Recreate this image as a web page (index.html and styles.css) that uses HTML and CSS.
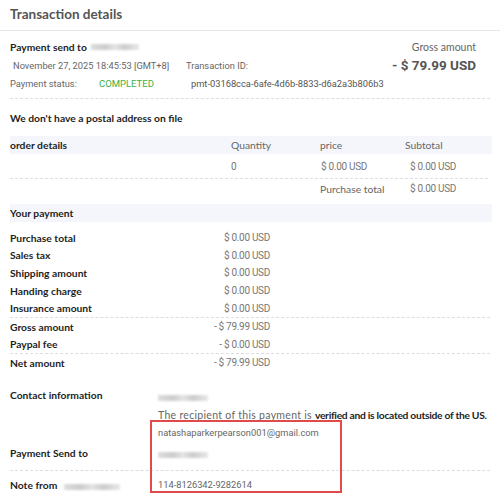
FILE: index.html
```html
<!DOCTYPE html>
<html lang="en">
<head>
  <meta charset="UTF-8">
  <title>Transaction details</title>
  <link rel="stylesheet" href="styles.css">
</head>
<body>

  <!-- Cabecera -->
  <div class="title">Transaction details</div>

  <div class="page">

    <!-- Resumen -->
    <div class="summary">
      <div class="sum-left">
        <div class="sum-row">
          <span class="label">Payment send to</span>
          <span class="blur blur-name"></span>
        </div>
        <div class="sum-row">
          <span class="muted date">November 27, 2025 18:45:53 [GMT+8]</span>
          <span class="muted tx-label">Transaction ID:</span>
        </div>
        <div class="sum-row">
          <span class="muted status">Payment status:</span>
          <span class="completed">COMPLETED</span>
          <span class="muted tx-id">pmt-03168cca-6afe-4d6b-8833-d6a2a3b806b3</span>
        </div>
      </div>
      <div class="sum-right">
        <div class="muted gross-label">Gross amount</div>
        <div class="gross">- $ 79.99 USD</div>
      </div>
    </div>

    <div class="label postal">We don't have a postal address on file</div>

    <!-- Detalle del pedido -->
    <div class="order">
      <div class="order-row head">
        <span class="label">order details</span>
        <span class="muted c-qty">Quantity</span>
        <span class="muted c-price">price</span>
        <span class="muted c-sub">Subtotal</span>
      </div>
      <div class="order-row line">
        <span></span>
        <span class="muted num c-qty">0</span>
        <span class="muted num c-price">$ 0.00 USD</span>
        <span class="muted num c-sub">$ 0.00 USD</span>
      </div>
      <div class="order-row">
        <span></span>
        <span></span>
        <span class="muted c-total">Purchase total</span>
        <span class="muted num c-sub">$ 0.00 USD</span>
      </div>
    </div>

    <!-- Tu pago -->
    <div class="band label">Your payment</div>
    <div class="pay">
      <div class="pay-row"><span class="label">Purchase total</span><span class="num">$ 0.00 USD</span></div>
      <div class="pay-row"><span class="label">Sales tax</span><span class="num">$ 0.00 USD</span></div>
      <div class="pay-row"><span class="label">Shipping amount</span><span class="num">$ 0.00 USD</span></div>
      <div class="pay-row"><span class="label">Handing charge</span><span class="num">$ 0.00 USD</span></div>
      <div class="pay-row line"><span class="label">Insurance amount</span><span class="num">$ 0.00 USD</span></div>
      <div class="pay-row"><span class="label">Gross amount</span><span class="num">- $ 79.99 USD</span></div>
      <div class="pay-row line"><span class="label">Paypal fee</span><span class="num">- $ 0.00 USD</span></div>
      <div class="pay-row"><span class="label">Net amount</span><span class="num">- $ 79.99 USD</span></div>
    </div>

    <!-- Contacto -->
    <div class="contact">
      <div class="c-row">
        <span class="label">Contact information</span>
        <div class="c-val">
          <span class="blur blur-small"></span>
          <div class="recipient">The recipient of this payment is <b>verified and is located outside of the US.</b></div>
          <div class="muted">natashaparkerpearson001@gmail.com</div>
        </div>
      </div>
      <div class="c-row send line">
        <span class="label">Payment Send to</span>
        <div class="c-val"><span class="blur blur-small"></span></div>
      </div>
      <div class="c-row note">
        <span class="label">Note from <span class="blur blur-note"></span></span>
        <div class="c-val muted">114-8126342-9282614</div>
      </div>
      <div class="mark"></div>
    </div>

  </div>

</body>
</html>
```

FILE: styles.css
```css
body {
  margin: 0;
  background: #fff;
  color: #222;
  font-family: Lato, sans-serif;
  width: 500px;
  height: 500px;
  overflow: hidden;
  white-space: nowrap;
}

.title {
  height: 31px;
  box-sizing: border-box;
  padding: 6px 10px 0;
  font-size: 13.5px;
  font-weight: 700;
  color: #555;
  border-bottom: 1px solid #e6e6e6;
}

.page {
  padding: 0 10px;
}

.label {
  font-size: 10.3px;
  font-weight: 700;
  color: #1e1e1e;
}

.muted {
  font-family: Roboto, sans-serif;
  font-size: 9.3px;
  color: #666;
}

.num {
  font-family: Roboto, sans-serif;
  font-size: 10px;
  color: #777;
  letter-spacing: -0.3px;
}

.blur {
  display: inline-block;
  height: 6px;
  background: linear-gradient(90deg, #ddd, #ccc 30%, #e4e4e4 50%, #ccc 70%, #e8e8e8);
  filter: blur(1px);
  vertical-align: middle;
}

.blur-name { width: 48px; margin-left: 4px; }
.blur-small { width: 50px; }
.blur-note { width: 56px; margin-left: 4px; }

/* Resumen */
.summary {
  display: flex;
  justify-content: space-between;
  padding: 7px 0 6px;
  border-bottom: 1px dashed #ddd;
}

.sum-row {
  height: 18px;
  display: flex;
  align-items: center;
}

.date { padding-left: 3px; width: 173px; }
.status { width: 89px; }
.completed {
  width: 92px;
  font-family: Roboto, sans-serif;
  font-size: 9.5px;
  color: #3cb043;
}
.tx-id { color: #555; }

.sum-right {
  text-align: right;
  padding-right: 14px;
}

.gross-label {
  font-family: Lato, sans-serif;
  font-size: 10.5px;
  line-height: 18px;
  color: #666;
}

.gross {
  font-family: Roboto, sans-serif;
  font-size: 13.5px;
  font-weight: 700;
  color: #555;
  line-height: 18px;
}

.postal {
  padding-top: 13px;
  height: 24px;
}

/* Pedido */
.order-row {
  display: grid;
  grid-template-columns: 221px 89px 85px 1fr;
  align-items: center;
  height: 18px;
}

.order-row.head {
  background: #f5f6fb;
  margin-right: -2px;
}

.order-row.head .muted {
  font-family: Lato, sans-serif;
  font-size: 10.3px;
}

.order-row.line {
  height: 24px;
  border-bottom: 1px dashed #ddd;
  margin-right: 2px;
}

.c-price.num { padding-left: 1px; }
.c-sub.num { padding-left: 5px; }
.c-total { font-family: Lato, sans-serif; font-size: 10.3px; }

.order-row:last-child {
  height: 19px;
}

.band {
  margin-top: 6px;
  margin-right: -2px;
  height: 18px;
  line-height: 18px;
  background: #f5f6fb;
}

/* Pago */
.pay {
  padding-top: 7px;
}

.pay-row {
  display: grid;
  grid-template-columns: 180px 80px;
  align-items: center;
  height: 17.6px;
}

.pay-row .num { text-align: right; }

/* Contacto */
.contact {
  position: relative;
  padding-top: 14px;
}

.c-row {
  display: grid;
  grid-template-columns: 148px 1fr;
}

.c-row > .label {
  line-height: 18px;
}

.c-val > div {
  line-height: 17.5px;
}

.recipient {
  font-size: 10.5px;
  letter-spacing: 0.3px;
  color: #666;
}

.recipient b {
  font-size: 10.3px;
  color: #1e1e1e;
  letter-spacing: -0.3px;
}

.c-val > .blur {
  margin: 6px 0;
}

.send {
  margin-top: 2px;
  padding-bottom: 6px;
}

.send .c-val .blur {
  margin-top: 5px;
}

.line {
  border-bottom: 1px dashed #ddd;
}

.note {
  padding-top: 5px;
}

.note .c-val { line-height: 18px; }

.mark {
  position: absolute;
  left: 140px;
  top: 48px;
  width: 188px;
  height: 69px;
  border: 2px solid #e04a4a;
}
```
